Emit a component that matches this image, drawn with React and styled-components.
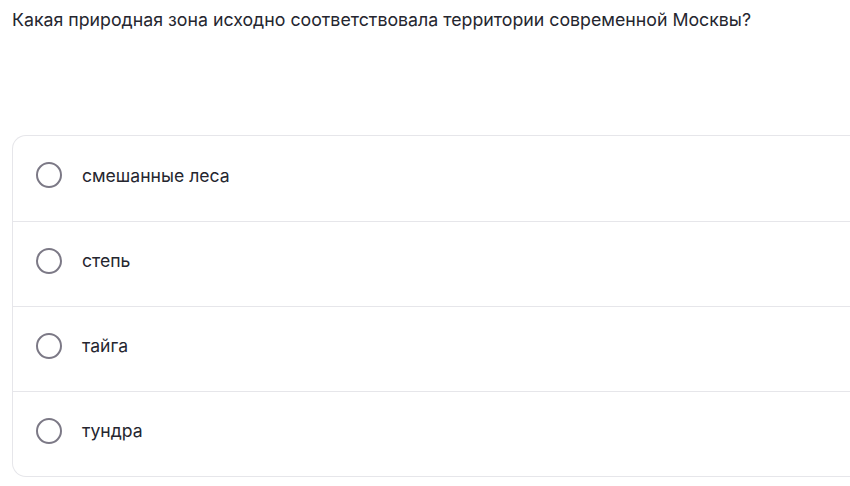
import React from "react"
import styled, { createGlobalStyle } from "styled-components"

const GlobalStyle = createGlobalStyle`
  html, body {
    margin: 0;
    padding: 0;
    background: #fff;
    font-family: Inter, "Noto Sans", sans-serif;
    overflow: hidden;
  }
`;

const Page = styled.div`
  width: 850px;
  height: 486px;
  padding: 9px 0 0 12px;
  box-sizing: border-box;
`;

const Question = styled.h1`
  margin: 0;
  font-size: 17.75px;
  font-weight: 400;
  line-height: 22px;
  color: #25262f;
`;

const Card = styled.div`
  margin-top: 104px;
  width: 860px;
  border: 1px solid #e6e6ea;
  border-right: none;
  border-radius: 14px 0 0 14px;
  overflow: hidden;
`;

const Option = styled.label`
  display: flex;
  align-items: center;
  gap: 20px;
  height: 85px;
  padding: 0 0 7px 23px;
  box-sizing: border-box;
  border-top: ${p => (p.first ? "none" : "1px solid #e6e6ea")};
  cursor: pointer;
`;

const Radio = styled.span`
  width: 26px;
  height: 26px;
  box-sizing: border-box;
  border: 2.5px solid #7c7986;
  border-radius: 50%;
  flex-shrink: 0;
`;

const Label = styled.span`
  font-size: 17.6px;
  color: #25262f;
`;

const options = ["смешанные леса", "степь", "тайга", "тундра"];

export default function App() {
  return (
    <Page>
      <GlobalStyle />
      <Question>Какая природная зона исходно соответствовала территории современной Москвы?</Question>
      <Card>
        {options.map((o, i) => (
          <Option key={o} first={i === 0}>
            <Radio />
            <Label>{o}</Label>
          </Option>
        ))}
      </Card>
    </Page>
  )
}
